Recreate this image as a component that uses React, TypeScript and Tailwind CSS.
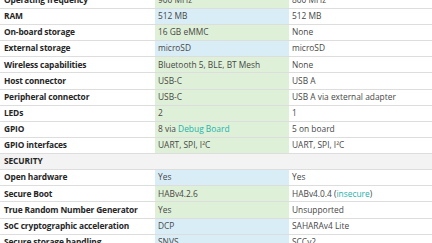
type Tone = "green" | "blue" | "none";

type Row =
  | { kind: "section"; label: string }
  | { kind: "row"; label: string; a: React.ReactNode; tone: Tone; b: React.ReactNode };

const link = "text-[#23b3ab]";

const rows: Row[] = [
  { kind: "row", label: "Operating frequency", a: "900 MHz", tone: "green", b: "800 MHz" },
  { kind: "row", label: "RAM", a: "512 MB", tone: "blue", b: "512 MB" },
  { kind: "row", label: "On-board storage", a: "16 GB eMMC", tone: "green", b: "None" },
  { kind: "row", label: "External storage", a: "microSD", tone: "blue", b: "microSD" },
  { kind: "row", label: "Wireless capabilities", a: "Bluetooth 5, BLE, BT Mesh", tone: "green", b: "None" },
  { kind: "row", label: "Host connector", a: "USB-C", tone: "green", b: "USB A" },
  { kind: "row", label: "Peripheral connector", a: "USB-C", tone: "green", b: "USB A via external adapter" },
  { kind: "row", label: "LEDs", a: "2", tone: "green", b: "1" },
  {
    kind: "row",
    label: "GPIO",
    a: (
      <span>
        8 via <span className={link}>Debug Board</span>
      </span>
    ),
    tone: "green",
    b: "5 on board",
  },
  { kind: "row", label: "GPIO interfaces", a: "UART, SPI, I²C", tone: "green", b: "UART, SPI, I²C" },
  { kind: "section", label: "SECURITY" },
  { kind: "row", label: "Open hardware", a: "Yes", tone: "blue", b: "Yes" },
  {
    kind: "row",
    label: "Secure Boot",
    a: "HABv4.2.6",
    tone: "green",
    b: (
      <span>
        HABv4.0.4 (<span className={link}>insecure</span>)
      </span>
    ),
  },
  { kind: "row", label: "True Random Number Generator", a: "Yes", tone: "green", b: "Unsupported" },
  { kind: "row", label: "SoC cryptographic acceleration", a: "DCP", tone: "blue", b: "SAHARAv4 Lite" },
  { kind: "row", label: "Secure storage handling", a: "SNVS", tone: "blue", b: "SCCv2" },
];

const toneBg: Record<Tone, string> = {
  green: "bg-[#dff0d8]",
  blue: "bg-[#d9edf7]",
  none: "bg-white",
};

export default function App() {
  return (
    <div className="h-[243px] w-[432px] overflow-hidden bg-white font-['Open_Sans','Liberation_Sans',sans-serif] text-[8.4px]">
      <div className="-mt-[8.2px]">
        {rows.map((r, i) =>
          r.kind === "section" ? (
            <div
              key={i}
              className="flex h-[16.14px] items-center border-t border-[#dddddd] bg-[#f3f3f3] px-[4px] font-bold tracking-[-0.1px] text-[#262626]"
            >
              {r.label}
            </div>
          ) : (
            <div
              key={i}
              className="grid h-[16.14px] grid-cols-[155px_134px_1fr] border-t border-[#dddddd]"
            >
              <div className="flex items-center whitespace-nowrap px-[4px] font-bold tracking-[-0.15px] text-[#262626]">
                {r.label}
              </div>
              <div className={`flex items-center whitespace-nowrap px-[3px] text-[#474747] ${toneBg[r.tone]}`}>
                {r.a}
              </div>
              <div className="flex items-center whitespace-nowrap px-[3px] text-[#474747]">{r.b}</div>
            </div>
          )
        )}
      </div>
    </div>
  );
}
